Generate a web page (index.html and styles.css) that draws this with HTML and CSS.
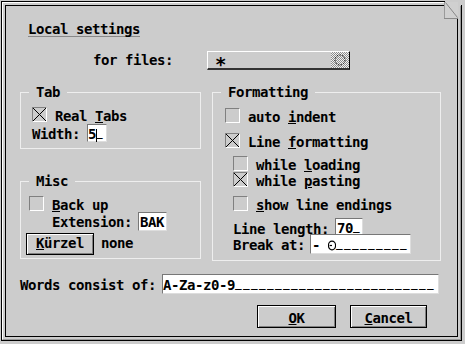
FILE: index.html
```html
<!DOCTYPE html>
<html lang="en">
<head>
<meta charset="utf-8">
<title>Local settings</title>
<link rel="stylesheet" href="styles.css">
</head>
<body>
<div class="win">
  <div class="bevel">
    <div class="inner">
      <div class="heading"><span class="htext">Local settings</span></div>

      <div class="row files">
        <span class="lbl">for files:</span>
        <span class="popfield">
          <span class="pf-text"><span class="ast">*</span></span>
          <span class="pf-btn"><svg width="12" height="12" viewBox="0 0 12 12"><circle cx="6" cy="6" r="5" fill="none" stroke="#000" stroke-width="1" stroke-dasharray="1.4 1.4"/></svg></span>
        </span>
      </div>

      <div class="groups">
        <div class="col">
          <fieldset class="grp tab">
            <legend>Tab</legend>
            <div class="row cbrow r-realtabs">
              <span class="cb"><svg width="13" height="13" viewBox="0 0 13 13"><path d="M0 0L13 13M13 0L0 13" stroke="#000" stroke-width="1"/></svg></span>
              <span class="lbl">Real <u>T</u>abs</span>
            </div>
            <div class="row r-width">
              <span class="lbl l2">Width:</span>
              <span class="field f-width">5<i class="caret"></i><span class="us">_</span></span>
            </div>
          </fieldset>

          <fieldset class="grp misc">
            <legend>Misc</legend>
            <div class="row cbrow r-backup">
              <span class="cb"></span>
              <span class="lbl"><u>B</u>ack up</span>
            </div>
            <div class="row r-ext">
              <span class="lbl l2">Extension:</span>
              <span class="field f-bak">BAK</span>
            </div>
            <div class="row r-kz">
              <span class="btn b-kz"><u>K</u>ürzel</span>
              <span class="lbl none">none</span>
            </div>
          </fieldset>
        </div>

        <fieldset class="grp fmt">
          <legend>Formatting</legend>
          <div class="row cbrow r-auto">
            <span class="cb"></span>
            <span class="lbl">auto <u>i</u>ndent</span>
          </div>
          <div class="row cbrow r-linefmt">
            <span class="cb"><svg width="13" height="13" viewBox="0 0 13 13"><path d="M0 0L13 13M13 0L0 13" stroke="#000" stroke-width="1"/></svg></span>
            <span class="lbl">Line <u>f</u>ormatting</span>
          </div>
          <div class="row cbrow r-load">
            <span class="cb"></span>
            <span class="lbl">while <u>l</u>oading</span>
          </div>
          <div class="row cbrow r-paste">
            <span class="cb"><svg width="13" height="13" viewBox="0 0 13 13"><path d="M0 0L13 13M13 0L0 13" stroke="#000" stroke-width="1"/></svg></span>
            <span class="lbl">while <u>p</u>asting</span>
          </div>
          <div class="row cbrow r-show">
            <span class="cb"></span>
            <span class="lbl"><u>s</u>how line endings</span>
          </div>
          <div class="row r-ll">
            <span class="lbl l3">Line length:</span>
            <span class="field f-ll">70<span class="us">_</span></span>
          </div>
          <div class="row r-break">
            <span class="lbl l3">Break at:</span>
            <span class="field f-break">- <svg class="clk" width="8" height="16" viewBox="0 0 8 16"><ellipse cx="4" cy="8.5" rx="3.6" ry="4.3" fill="none" stroke="#000" stroke-width="1.2"/><path d="M4 8.5H1.6" stroke="#000" stroke-width="1.2"/></svg><span class="us">_________</span></span>
          </div>
        </fieldset>
      </div>

      <div class="row r-words">
        <span class="lbl l3">Words consist of:</span>
        <span class="field f-words">A-Za-z0-9<span class="us">_________________________</span></span>
      </div>

      <div class="btnrow">
        <span class="btn b-ok"><u>O</u>K</span>
        <span class="btn b-cancel"><u>C</u>ancel</span>
      </div>
    </div>
  </div>
  <svg class="fold" width="19" height="20" viewBox="0 0 19 20" shape-rendering="crispEdges">
    <rect width="19" height="20" fill="#ccc"/>
    <rect x="0" y="1" width="1" height="1" fill="#000"/>
    <rect x="0" y="2" width="1" height="17" fill="#9a9a9a"/>
    <rect x="1" y="2" width="13" height="16" fill="#d0d0d0"/>
    <path d="M1.5 2.5L13.5 17.5" stroke="#888" stroke-width="1" shape-rendering="auto"/>
    <rect x="0" y="18" width="14" height="1" fill="#8a8a8a"/>
    <rect x="13" y="19" width="1" height="1" fill="#000"/>
    <rect x="16" y="6" width="1" height="14" fill="#999"/>
    <rect x="17" y="5" width="1" height="15" fill="#000"/>
  </svg>
</div>
</body>
</html>
```

FILE: styles.css
```css
* { box-sizing: border-box; }

html, body {
  margin: 0;
  padding: 0;
  background: #ccc;
}

body {
  width: 465px;
  height: 344px;
  overflow: hidden;
  font: bold 14px/16px "DejaVu Sans Mono", "Liberation Mono", monospace;
  letter-spacing: -0.43px;
  color: #000;
}

u {
  text-decoration: underline;
  text-underline-offset: 1px;
  text-decoration-thickness: 1px;
}

/* window frame */
.win {
  position: relative;
  margin: 1px 0 0 1px;
  width: 461px;
  height: 340px;
  border: 1px solid #000;
}

.bevel {
  height: 100%;
  border: 1px solid;
  border-color: #fff #999 #999 #fff;
  padding: 2px;
}

.inner {
  height: 100%;
  border: 1px solid #000;
}

.fold {
  position: absolute;
  left: 442px;
  top: -2px;
  display: block;
}

/* heading */
.heading {
  display: flex;
  margin: 15px 0 0 22px;
}

.htext {
  padding-top: 1px;
  line-height: 14px;
  border-bottom: 1px solid #888;
}

/* generic rows */
.row {
  display: flex;
  align-items: flex-start;
}

.lbl { white-space: pre; flex: none; }
.l2 { margin-top: 2px; }
.l3 { margin-top: 3px; }

/* file pattern row */
.files {
  margin: 14px 0 0 87px;
  height: 19px;
}

.files .lbl { margin-top: 1px; }

.popfield {
  display: flex;
  margin-left: 34px;
  height: 19px;
}

.pf-text {
  width: 124px;
  height: 19px;
  border-top: 1px solid #fff;
  border-left: 1px solid #fff;
  border-bottom: 2px solid #333;
  padding: 0 0 0 7px;
  line-height: 18px;
}

.ast {
  font-size: 19px;
  display: inline-block;
  line-height: 16px;
  vertical-align: -5px;
}

.pf-btn {
  width: 19px;
  height: 19px;
  border-top: 1px solid #fff;
  border-right: 1px solid #000;
  border-bottom: 2px solid #333;
  background: repeating-conic-gradient(#8c8c8c 0 25%, #f2f2f2 0 50%) 0 0 / 2px 2px;
  display: flex;
  align-items: center;
  justify-content: center;
}

.pf-btn svg { display: block; }

/* groups */
.groups {
  display: flex;
  align-items: flex-start;
  gap: 11px;
  margin: 13px 0 0 14px;
}

.col {
  display: flex;
  flex-direction: column;
  width: 181px;
}

fieldset.grp {
  margin: 0;
  padding: 0;
  min-width: 0;
  border: 1px solid #eee;
}

.grp legend {
  padding: 0 7px;
  margin-left: 8px;
  line-height: 18px;
}

fieldset.tab { padding-bottom: 6px; }
fieldset.misc { margin-top: 23px; padding-bottom: 3px; }
fieldset.fmt { width: 229px; padding-bottom: 6px; }

/* checkbox */
.cbrow { height: 16px; }
.cbrow .lbl { margin: 1px 0 0 8px; }

.cb {
  flex: none;
  width: 15px;
  height: 15px;
  border: 1px solid;
  border-color: #808080 #fff #fff #808080;
}

.cb svg { display: block; }

/* row placement */
.r-realtabs { margin: 6px 0 0 11px; }
.r-width { margin: 1px 0 0 11px; height: 18px; }
.r-backup { margin: 6px 0 0 8px; }
.r-ext { margin: 0 0 0 31px; height: 19px; }
.r-kz { margin: 2px 0 0 5px; height: 22px; }
.r-auto { margin: 7px 0 0 12px; }
.r-linefmt { margin: 9px 0 0 12px; }
.r-load { margin: 7px 0 0 20px; }
.r-paste { margin: 0 0 0 20px; }
.r-show { margin: 8px 0 0 20px; }
.r-ll { margin: 6px 0 0 20px; height: 17px; }
.r-break { margin: -1px 0 0 20px; height: 20px; }
.r-words { margin: 13px 0 0 14px; height: 20px; }

/* edit fields */
.field {
  flex: none;
  background: #fff;
  border: 1px solid;
  border-color: #777 #ddd #ddd #777;
  line-height: 16px;
  white-space: pre;
}

.f-width { width: 20px; height: 18px; margin-left: 7px; padding: 1px 0 0 0; }
.f-bak { width: 29px; height: 19px; margin-left: 6px; padding: 1px 0 0 1px; }
.f-ll { width: 28px; height: 17px; margin-left: 6px; padding: 1px 0 0 1px; }
.f-break { width: 101px; height: 20px; margin-left: 5px; padding: 2px 0 0 1px; }
.f-words { width: 277px; height: 20px; margin-left: 6px; padding: 2px 0 0 0; }

/* placeholder underscores: short dashes on the baseline */
.us {
  font-size: 11px;
  letter-spacing: 1.38px;
  line-height: 0;
  vertical-align: 3px;
}

.caret {
  display: inline-block;
  width: 1px;
  height: 13px;
  margin-right: -1px;
  background: #000;
  vertical-align: -3px;
}

.clk { vertical-align: top; }

/* buttons */
.btn {
  flex: none;
  display: block;
  border: 1px solid #000;
  box-shadow: inset 1px 1px 0 #fff, inset -1px -1px 0 #808080;
  background: #ccc;
  text-align: center;
  white-space: pre;
}

.b-kz { width: 68px; height: 22px; padding-top: 1px; }
.none { margin: 2px 0 0 7px; }

.btnrow {
  display: flex;
  gap: 14px;
  margin: 11px 0 0 251px;
}

.b-ok { width: 79px; height: 23px; padding-top: 4px; }
.b-cancel { width: 77px; height: 23px; padding-top: 4px; }
```
